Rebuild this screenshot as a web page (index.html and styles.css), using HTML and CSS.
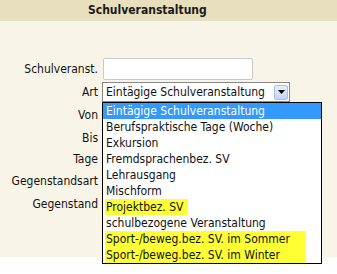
FILE: index.html
```html
<!DOCTYPE html>
<html lang="de">
<head>
<meta charset="utf-8">
<title>Schulveranstaltung</title>
<link rel="stylesheet" href="styles.css">
</head>
<body>
<div class="panel">
  <div class="header">Schulveranstaltung</div>
  <div class="form">
    <div class="label">Schulveranst.</div>
    <div class="field"><div class="input"></div></div>

    <div class="label">Art</div>
    <div class="field">
      <div class="select">
        <span class="select-text">Eintägige Schulveranstaltung</span>
        <span class="arrow"><svg width="7" height="4" viewBox="0 0 7 4"><path d="M0 0H7L3.5 4Z" fill="#000"/></svg></span>
        <ul class="list">
          <li class="opt sel">Eintägige Schulveranstaltung</li>
          <li class="opt">Berufspraktische Tage (Woche)</li>
          <li class="opt">Exkursion</li>
          <li class="opt">Fremdsprachenbez. SV</li>
          <li class="opt">Lehrausgang</li>
          <li class="opt">Mischform</li>
          <li class="opt"><span class="hl">Projektbez. SV</span></li>
          <li class="opt">schulbezogene Veranstaltung</li>
          <li class="opt"><span class="hl hl-wide">Sport-/beweg.bez. SV. im Sommer</span></li>
          <li class="opt"><span class="hl hl-wide">Sport-/beweg.bez. SV. im Winter</span></li>
        </ul>
      </div>
    </div>

    <div class="label">Von</div>
    <div class="field"></div>

    <div class="label">Bis</div>
    <div class="field"></div>

    <div class="label">Tage</div>
    <div class="field"></div>

    <div class="label">Gegenstandsart</div>
    <div class="field"></div>

    <div class="label">Gegenstand</div>
    <div class="field"></div>
  </div>
</div>
</body>
</html>
```

FILE: styles.css
```css
html, body {
  margin: 0;
  padding: 0;
  background: #ffffff;
}

body {
  min-height: 274px;
  font-family: "DejaVu Sans Condensed", "DejaVu Sans", sans-serif;
  font-stretch: condensed;
  font-size: 12px;
  color: #111;
}

.panel {
  width: 337px;
  height: 257px;
  background: #f8f5e8;
}

.header {
  height: 21px;
  line-height: 21px;
  background: #e8dfbf;
  font-weight: bold;
  padding-left: 88px;
  color: #1a1a1a;
}

.form {
  display: grid;
  grid-template-columns: 98px 1fr;
  grid-template-rows: 24px 22px 24px 21px 21px 23px 23px;
  column-gap: 4px;
  padding-top: 36px;
  align-items: center;
}

.label {
  text-align: right;
  white-space: nowrap;
}

.field {
  position: relative;
  height: 100%;
  display: flex;
  align-items: center;
}

.input {
  margin-left: 1px;
  width: 148px;
  height: 20px;
  background: #fff;
  border: 1px solid #c8c8c8;
  border-radius: 2px;
}

.select {
  position: relative;
  box-sizing: border-box;
  width: 188px;
  height: 20px;
  background: #fff;
  border: 1px solid #888;
  display: flex;
  align-items: center;
  padding: 0 1px 0 3px;
}

.select-text {
  flex: 1;
  white-space: nowrap;
}

.arrow {
  box-sizing: border-box;
  width: 14px;
  height: 15px;
  border: 1px solid #a9bfe0;
  border-radius: 2px;
  background: linear-gradient(#e6eefc, #c3d3f3);
  display: flex;
  align-items: center;
  justify-content: center;
}

.list {
  position: absolute;
  top: 19px;
  left: -1px;
  width: 218px;
  margin: 0;
  padding: 0;
  list-style: none;
  background: #fff;
  border: 1px solid #000;
  z-index: 2;
}

.opt {
  height: 16px;
  line-height: 16px;
  padding-left: 3px;
  white-space: nowrap;
}

.opt.sel {
  background: #3399ff;
  color: #fff;
}

.hl {
  display: inline-block;
  margin-left: -1px;
  padding: 0 5px 0 1px;
  background: #ffff33;
}

.hl-wide {
  width: 195px;
}
```
